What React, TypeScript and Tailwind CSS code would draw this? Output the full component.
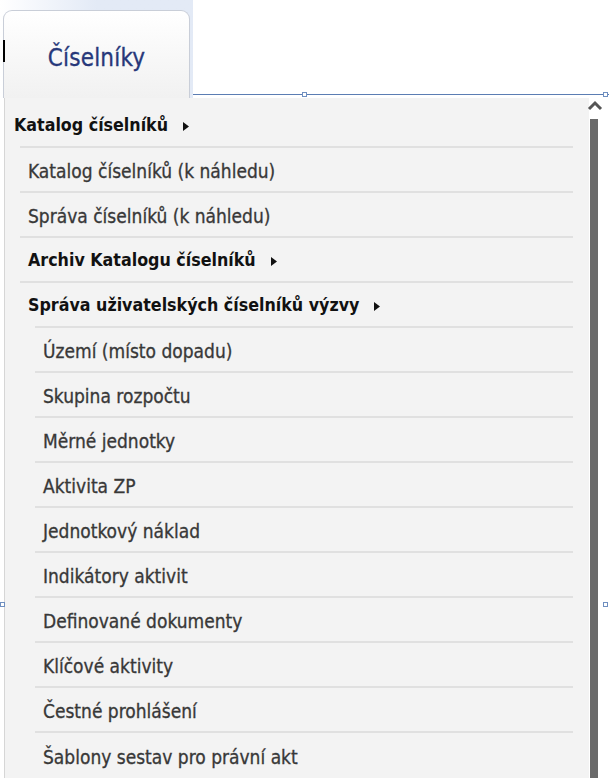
const items: { label: string; level: 0 | 1 | 2; bold?: boolean; arrow?: boolean }[] = [
  { label: "Katalog číselníků", level: 0, bold: true, arrow: true },
  { label: "Katalog číselníků (k náhledu)", level: 1 },
  { label: "Správa číselníků (k náhledu)", level: 1 },
  { label: "Archiv Katalogu číselníků", level: 1, bold: true, arrow: true },
  { label: "Správa uživatelských číselníků výzvy", level: 1, bold: true, arrow: true },
  { label: "Území (místo dopadu)", level: 2 },
  { label: "Skupina rozpočtu", level: 2 },
  { label: "Měrné jednotky", level: 2 },
  { label: "Aktivita ZP", level: 2 },
  { label: "Jednotkový náklad", level: 2 },
  { label: "Indikátory aktivit", level: 2 },
  { label: "Definované dokumenty", level: 2 },
  { label: "Klíčové aktivity", level: 2 },
  { label: "Čestné prohlášení", level: 2 },
  { label: "Šablony sestav pro právní akt", level: 2 },
];

function Handle({ className }: { className: string }) {
  return <div className={"absolute h-[5px] w-[5px] border border-[#6f8fc0] bg-white " + className} />;
}

export default function App() {
  return (
    <div
      className="relative h-[782px] w-[609px] overflow-hidden bg-white"
      style={{ fontFamily: '"DejaVu Sans Condensed", "DejaVu Sans", sans-serif', fontStretch: "condensed" }}
    >
      {/* tab strip */}
      <div className="flex h-[98px]">
        <div className="w-[193px] pr-[3px] pt-[10px] bg-gradient-to-r from-white via-[#e3eaf6] to-[#e3eaf6]">
          <div className="relative ml-[3px] flex h-[88px] items-center justify-center rounded-t-[9px] border border-b-0 border-[#c9ced8] bg-gradient-to-b from-white to-[#f1f1f1] pt-[6px]">
            <span className="text-[24px] leading-none tracking-[0.2px] text-[#27387a] [-webkit-text-stroke:0.3px_#27387a]">
              Číselníky
            </span>
          </div>
        </div>
        <div className="flex flex-1 flex-col justify-end pb-[3px]">
          <div className="h-px bg-[#5b7db3]" />
        </div>
      </div>

      <div className="absolute left-[3px] top-[40px] h-[22px] w-[2px] bg-black" />
      <Handle className="left-[302px] top-[92px]" />
      <Handle className="left-[603px] top-[92px]" />
      <Handle className="left-[0px] top-[602px]" />
      <Handle className="left-[603px] top-[602px]" />

      {/* menu */}
      <div className="flex h-[680px]">
        <div className="ml-[4px] w-[585px] border-l border-[#d6d6d6] bg-[#f3f3f3] pt-[5px]">
          {items.map((it, i) => (
            <div key={i} className="flex h-[45px] flex-col">
              <div
                className={
                  "flex flex-1 items-center pt-[3px] leading-none " +
                  (it.bold
                    ? "text-[17.7px] font-bold text-[#111111] "
                    : "text-[19px] text-[#383838] [-webkit-text-stroke:0.3px_#383838] ") +
                  (it.level === 0 ? "pl-[9px]" : it.level === 1 ? "pl-[23px]" : "pl-[38px]")
                }
              >
                <span>{it.label}</span>
                {it.arrow && (
                  <svg width="6" height="9" viewBox="0 0 6 9" className="ml-[15px]">
                    <path d="M0 0 L6 4.5 L0 9 Z" fill="#111" />
                  </svg>
                )}
              </div>
              {i < items.length - 1 && (
                <div
                  className={
                    "h-[2px] bg-[#e0e0e0] mr-[16px] " + (it.level === 2 || i === 4 ? "ml-[30px]" : "ml-[15px]")
                  }
                />
              )}
            </div>
          ))}
        </div>
        <div className="flex flex-1 flex-col items-start pt-[2px]">
          <svg width="16" height="12" viewBox="0 0 16 12" className="ml-[-2px]">
            <path d="M2 9 L8 3 L14 9" fill="none" stroke="#555" strokeWidth="3" />
          </svg>
          <div className="ml-[1px] mt-[7px] w-[8px] flex-1 bg-[#6a6a6a]" />
        </div>
      </div>
    </div>
  );
}
